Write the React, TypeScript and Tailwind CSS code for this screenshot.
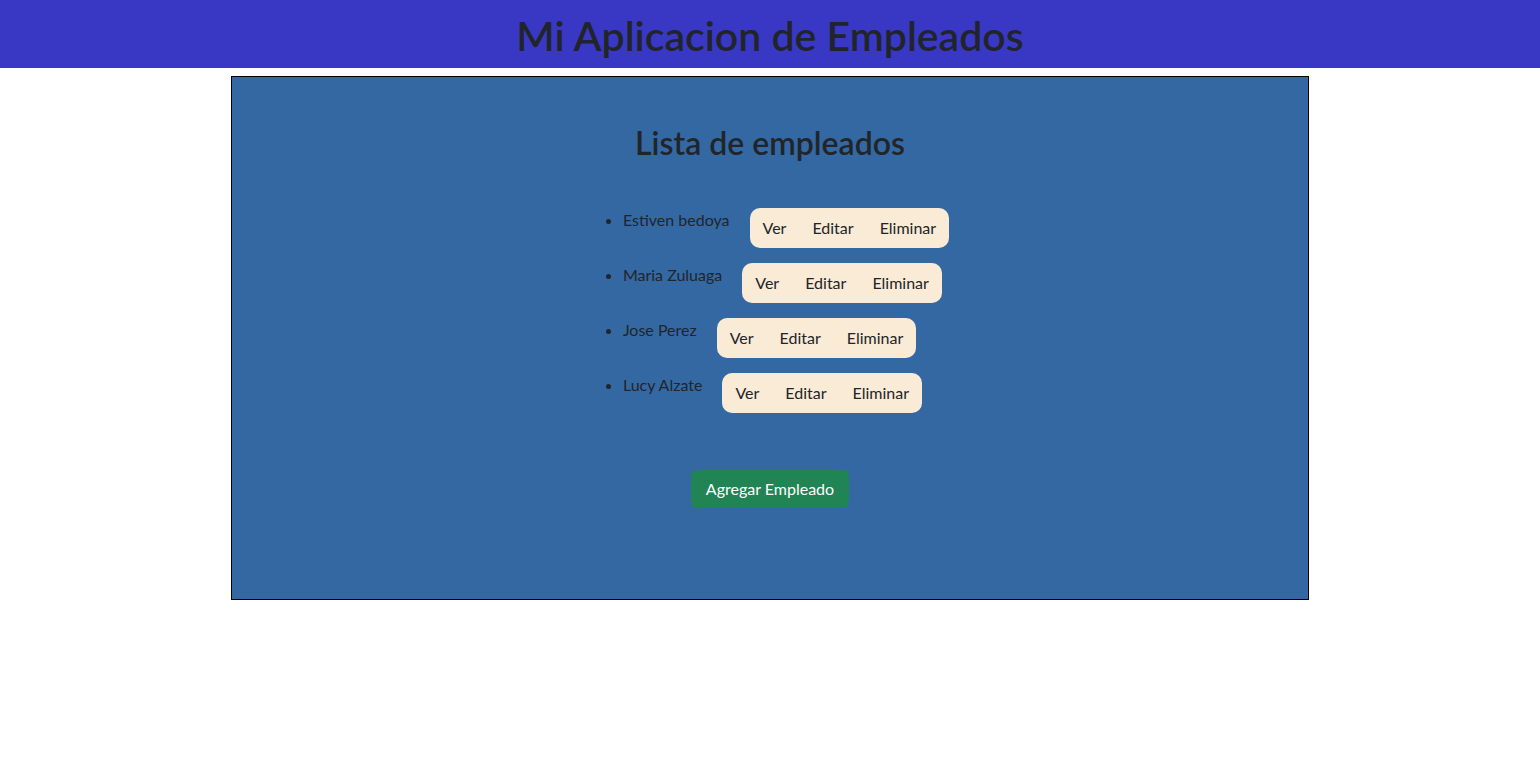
import React from "react";

const empleados = ["Estiven bedoya", "Maria Zuluaga", "Jose Perez", "Lucy Alzate"];

export default function App() {
  return (
    <div className="min-h-[770px] bg-white text-[#212529]" style={{ fontFamily: "Lato, 'Open Sans', sans-serif" }}>
      <header className="h-[68px] bg-[#3838c5] flex items-center justify-center pt-[3px]">
        <h1 className="text-[41px] font-semibold leading-[48px] text-[#212529]">Mi Aplicacion de Empleados</h1>
      </header>
      <main className="mx-auto mt-[8px] w-[1078px] h-[524px] border border-black bg-[#3468a3] flex flex-col items-center">
        <h2 className="mt-[46px] text-[32px] font-semibold leading-[40px]">Lista de empleados</h2>
        <ul className="mt-[45px] list-disc pl-[32px] text-[16px] leading-[24px]">
          {empleados.map((e) => (
            <li key={e} className="mb-[15px]">
              <div className="flex items-start">
                <span>{e}</span>
                <div className="ml-[20px] flex rounded-[10px] bg-[#faebd7]">
                  <button className="px-[13px] py-[8px] leading-[24px]">Ver</button>
                  <button className="px-[13px] py-[8px] leading-[24px]">Editar</button>
                  <button className="px-[13px] py-[8px] leading-[24px]">Eliminar</button>
                </div>
              </div>
            </li>
          ))}
        </ul>
        <button className="mt-[42px] h-[38px] px-[15px] rounded-[6px] bg-[#208454] text-white text-[16px]">Agregar Empleado</button>
      </main>
    </div>
  );
}
